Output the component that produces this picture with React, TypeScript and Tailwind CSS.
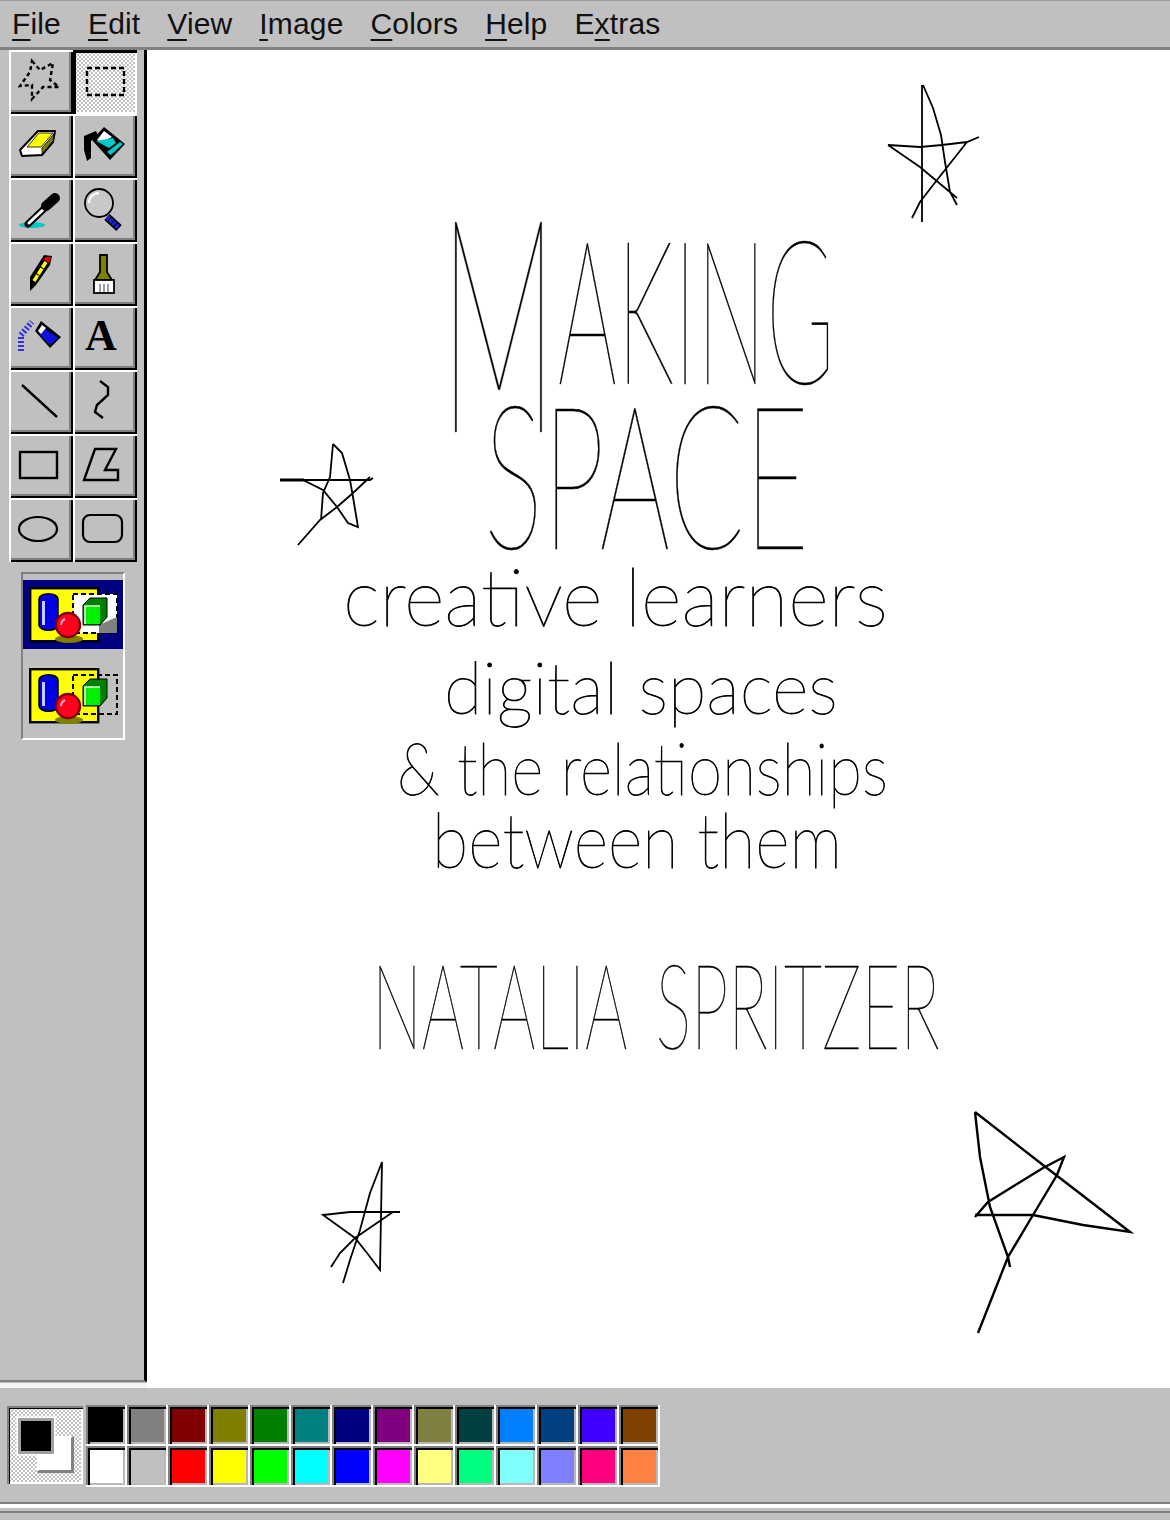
const menus = [
  { before: "", key: "F", after: "ile" },
  { before: "", key: "E", after: "dit" },
  { before: "", key: "V", after: "iew" },
  { before: "", key: "I", after: "mage" },
  { before: "", key: "C", after: "olors" },
  { before: "", key: "H", after: "elp" },
  { before: "E", key: "x", after: "tras" },
];

const topColors = ["bg-[#000000]", "bg-[#808080]", "bg-[#800000]", "bg-[#808000]", "bg-[#008000]", "bg-[#008080]", "bg-[#000080]", "bg-[#800080]", "bg-[#808040]", "bg-[#004040]", "bg-[#0080ff]", "bg-[#004080]", "bg-[#4000ff]", "bg-[#804000]"];
const bottomColors = ["bg-[#ffffff]", "bg-[#c0c0c0]", "bg-[#ff0000]", "bg-[#ffff00]", "bg-[#00ff00]", "bg-[#00ffff]", "bg-[#0000ff]", "bg-[#ff00ff]", "bg-[#ffff80]", "bg-[#00ff80]", "bg-[#80ffff]", "bg-[#8080ff]", "bg-[#ff0080]", "bg-[#ff8040]"];

// every tool is drawn in page coordinates, the viewBox picks out its cell
const tools = [
  <g fill="none" stroke="#000" strokeWidth="2.4" strokeDasharray="4 3">
    <polygon points="32,61 40,70 53,63 50,80 59,87 43,87 32,99 32,85 20,86 30,72" />
  </g>,
  <rect x="87" y="68" width="37" height="27" fill="none" stroke="#000" strokeWidth="2.4" strokeDasharray="5 3" />,
  <g stroke="#000" strokeWidth="2" strokeLinejoin="round">
    <polygon points="20,150 38,131 55,131 53,142 42,155 22,156" fill="#fff" />
    <polygon points="27,147 39,133 53,133 41,147" fill="#ffff00" strokeWidth="0.8" />
    <polygon points="42,148 54,134 53,141 42,154" fill="#808000" strokeWidth="0.8" />
  </g>,
  <g>
    <path d="M84 136 L96 131 L98 135 L91 141 L91 158 L87 161 L84 150 Z" fill="#000" />
    <polygon points="104,127 125,144 110,160 92,140" fill="#000" />
    <polygon points="104,131 112,137 102,142 97,140" fill="#fff" />
    <polygon points="96,141 113,138 116,143 109,148" fill="#00c8c8" />
    <polygon points="111,155 107,152 120,142 123,144" fill="#00c8c8" />
  </g>,
  <g strokeLinecap="round">
    <ellipse cx="32" cy="225" rx="13" ry="3" fill="#00c8c8" />
    <line x1="47" y1="206" x2="28" y2="224" stroke="#000" strokeWidth="7" />
    <line x1="46" y1="207" x2="29" y2="223" stroke="#fff" strokeWidth="3" />
    <line x1="46" y1="206" x2="55" y2="198" stroke="#000" strokeWidth="10" />
  </g>,
  <g>
    <circle cx="99" cy="203" r="14" fill="#c8c8c8" stroke="#000" strokeWidth="1.8" />
    <path d="M89 203 A10 10 0 0 1 99 193" fill="none" stroke="#fff" strokeWidth="2" />
    <line x1="107" y1="217" x2="119" y2="228" stroke="#000" strokeWidth="8" />
    <line x1="107" y1="217" x2="119" y2="228" stroke="#2020e0" strokeWidth="5" strokeDasharray="3 1" />
  </g>,
  <g>
    <polygon points="30,291 30,277 44,255 52,256 50,265 36,285" fill="#000" />
    <line x1="34" y1="281" x2="46" y2="262" stroke="#ffff00" strokeWidth="3.5" strokeDasharray="7 1" />
    <polygon points="45,257 51,257 49,263 44,260" fill="#e00000" />
  </g>,
  <g stroke="#000" strokeWidth="1.8">
    <path d="M100 255 H107 V272 L112 280 H95 L100 272 Z" fill="#808000" />
    <rect x="94" y="280" width="20" height="13" fill="#fff" />
    <path d="M100 284 V292 M104 284 V292 M108 284 V292" stroke="#808080" strokeWidth="1.5" />
  </g>,
  <g>
    <path d="M21 351 V335 L32 322" fill="none" stroke="#3030e0" strokeWidth="6" strokeDasharray="2 2" />
    <polygon points="41,321 61,337 50,348 35,331" fill="#000" />
    <polygon points="45,329 58,338 50,345 40,335" fill="#1010e0" />
    <polygon points="38,331 42,325 46,328 41,334" fill="#fff" />
  </g>,
  <text x="101" y="350" textAnchor="middle" fontFamily="'Liberation Serif', serif" fontWeight="700" fontSize="44" fill="#000">A</text>,
  <line x1="22" y1="385" x2="57" y2="417" stroke="#000" strokeWidth="2.4" />,
  <polyline points="100,381 108,387 108,395 97,405 95,412 103,418" fill="none" stroke="#000" strokeWidth="2.4" />,
  <rect x="20" y="452" width="37" height="26" fill="none" stroke="#000" strokeWidth="2.4" />,
  <polygon points="95,449 116,449 105,470 118,470 118,480 84,480" fill="none" stroke="#000" strokeWidth="2.4" />,
  <ellipse cx="38" cy="529" rx="19" ry="12" fill="none" stroke="#000" strokeWidth="2.2" />,
  <rect x="83" y="515" width="39" height="27" rx="7" fill="none" stroke="#000" strokeWidth="2.2" />,
];

const toolBoxes = [
  "9 50 64 64", "73 50 64 64",
  "9 114 64 64", "73 114 64 64",
  "9 178 64 64", "73 178 64 64",
  "9 242 64 64", "73 242 64 64",
  "9 306 64 64", "73 306 64 64",
  "9 370 64 64", "73 370 64 64",
  "9 434 64 64", "73 434 64 64",
  "9 498 64 64", "73 498 64 64",
];

const OpaqueIcon = ({ opaque }: { opaque: boolean }) => (
  <svg viewBox="0 0 92 60" className="w-[92px] h-[60px] block">
    <rect x="1.2" y="1.2" width="68" height="53" fill="#ffff00" stroke="#000" strokeWidth="2.4" />
    <rect x="44" y="7" width="44" height="39" fill={opaque ? "#fff" : "none"} stroke="#000" strokeWidth="2" strokeDasharray="5 3" />
    {opaque && <polygon points="70,38 88,30 88,46 70,46" fill="#808080" />}
    <ellipse cx="40" cy="52" rx="14" ry="4" fill="#808000" />
    <path d="M10 12 A9 5 0 0 1 29 12 V38 A9 5 0 0 1 10 38 Z" fill="#0000e0" stroke="#000" strokeWidth="1.5" />
    <rect x="13" y="14" width="3" height="24" fill="#c8c8ff" />
    <circle cx="39" cy="38" r="12" fill="#ff0020" stroke="#800000" strokeWidth="2.4" />
    <path d="M32 38 A7 7 0 0 1 36 32" fill="none" stroke="#ffb0c0" strokeWidth="2" />
    <polygon points="54,18 61,11 78,11 78,30 71,38 54,38" fill="#008000" stroke="#000" strokeWidth="1" />
    <rect x="56" y="19" width="15" height="18" fill="#00f000" />
    <path d="M56 37 V19 H71" fill="none" stroke="#e0ffe0" strokeWidth="1.6" />
  </svg>
);

const App = () => {
  return (
    <div className="w-[1170px] h-[1520px] flex flex-col overflow-hidden bg-[#c0c0c0] font-['Liberation_Sans',Arial,sans-serif] text-black">
      {/* menu bar */}
      <div className="h-[50px] flex items-start gap-[27px] pl-3 pt-[5px] border-t border-[#9a9a9a] border-b-[3px] border-b-[#808080] text-[30px] leading-[36px] tracking-[0.15px] text-[#111]">
        {menus.map((m) => (
          <span key={m.key}>
            {m.before}
            <span className="underline decoration-2 underline-offset-[5px]">{m.key}</span>
            {m.after}
          </span>
        ))}
      </div>

      <div className="flex-1 flex min-h-0">
        {/* tool column */}
        <div className="w-[147px] flex flex-col">
          <div className="flex-1 flex border-r-[3px] border-black border-b-2 border-b-[#808080] pl-[9px]">
            <div>
              <div className="grid grid-cols-[64px_64px] grid-rows-[repeat(8,64px)]">
                {tools.map((tool, i) => (
                  <div
                    key={toolBoxes[i]}
                    className={
                      i === 1
                        ? "bg-[repeating-conic-gradient(#ffffff_0_25%,#c0c0c0_0_50%)] bg-size-[4px_4px] shadow-[inset_3px_3px_0_#000,inset_-2px_-2px_0_#fff]"
                        : "bg-[#c0c0c0] shadow-[inset_2px_2px_0_#fff,inset_-2px_-2px_0_#000,inset_-4px_-4px_0_#808080]"
                    }
                  >
                    <svg viewBox={toolBoxes[i]} className="w-16 h-16 block">
                      {tool}
                    </svg>
                  </div>
                ))}
              </div>
              {/* opaque / transparent selection */}
              <div className="mt-[10px] ml-3 w-[104px] h-[168px] border-2 border-[#808080] border-r-white border-b-white pt-[6px] flex flex-col">
                <div className="h-[69px] bg-[#000080] pl-[6px] pt-[7px]">
                  <OpaqueIcon opaque />
                </div>
                <div className="pl-[6px] pt-[19px]">
                  <OpaqueIcon opaque={false} />
                </div>
              </div>
            </div>
          </div>
          <div className="h-[5px] mt-px bg-[#f4f4f4]" />
        </div>

        {/* drawing area */}
        <div className="flex-1 relative bg-white overflow-hidden font-['Lato',sans-serif] font-thin text-black leading-[0.75]">
          <svg viewBox="147 50 1023 1338" className="absolute inset-0 w-full h-full" fill="none" stroke="#000" strokeWidth="1.8">
            <path d="M923 85 L933 108 L941 135 L945 162 L950 192 L957 205 M922 85 V222 M888 145 L920 147 L942 145 L967 142 L979 137 M888 145 L920 167 L957 198 M967 142 L937 180 L920 202 L912 218" />
            <path d="M333 444 L330 477 L323 493 L321 520 M333 444 L342 453 L350 480 L353 497 L358 527 L348 523 L337 507 L323 490 L303 480 M280 480 L370 480 L373 478 M370 477 L353 493 L337 507 L320 520 L298 545" />
            <path d="M280 480 H304" strokeWidth="3" />
            <path d="M382 1162 L370 1193 L360 1230 L350 1260 L343 1283 M382 1162 L380 1270 L367 1253 L355 1238 L323 1215 L350 1212 L400 1212 M393 1212 L355 1238 L340 1253 L331 1267" />
            <path d="M975 1112 L1043 1165 L1130 1232 L1083 1225 L1033 1215 L975 1215 M975 1112 L980 1157 L990 1207 L1008 1257 L1010 1267 M975 1217 L988 1202 L1043 1168 L1064 1157 L1057 1175 L1033 1215 L1008 1257 L978 1333" strokeWidth="2.4" />
          </svg>

          <div className="absolute left-[293px] top-[106px] text-[200px] whitespace-nowrap origin-top-left scale-x-[0.465] [-webkit-text-stroke:0.5px_#000]">
            <span className="relative top-[48px] inline-block text-[300px] -mr-[14px] origin-left scale-x-[0.94]">M</span>
            AKING
          </div>
          <div className="absolute left-[337px] top-[347px] text-[200px] whitespace-nowrap origin-top-left scale-x-[0.555] [-webkit-text-stroke:0.5px_#000]">
            SPACE
          </div>
          <div className="absolute left-[196px] top-[515px] text-[80px] whitespace-nowrap origin-top-left scale-x-[0.98] [-webkit-text-stroke:0.8px_#000]">
            creative learners
          </div>
          <div className="absolute left-[297px] top-[609px] text-[72px] whitespace-nowrap origin-top-left scale-x-[0.98] [-webkit-text-stroke:0.8px_#000]">
            digital spaces
          </div>
          <div className="absolute left-[250px] top-[690px] text-[72px] whitespace-nowrap origin-top-left scale-x-[0.86] [-webkit-text-stroke:0.8px_#000]">
            &amp; the relationships
          </div>
          <div className="absolute left-[285px] top-[760px] text-[76px] whitespace-nowrap origin-top-left scale-x-[0.875] [-webkit-text-stroke:0.8px_#000]">
            between them
          </div>
          <div className="absolute left-[225px] top-[910px] text-[118px] whitespace-nowrap origin-top-left scale-x-[0.565] [word-spacing:20px] [-webkit-text-stroke:0.6px_#000]">
            NATALIA SPRITZER
          </div>
        </div>
      </div>

      {/* colour box and status lines */}
      <div className="h-[132px] flex flex-col">
        <div className="h-[114px] flex items-start pl-[7px] pt-[17px] gap-[3px]">
          <div className="relative mt-px w-[76px] h-[78px] bg-[repeating-conic-gradient(#ffffff_0_25%,#c0c0c0_0_50%)] bg-size-[4px_4px] shadow-[inset_2px_2px_0_#808080,inset_3px_3px_0_#000,inset_-2px_-2px_0_#fff]">
            <div className="absolute left-[30px] top-[30px] w-9 h-9 bg-white border-2 border-white border-r-[#808080] border-b-[#808080] shadow-[1px_1px_0_#808080]" />
            <div className="absolute left-[11px] top-3 w-9 h-9 bg-black border-[3px] border-[#a0a0a0] shadow-[0_0_0_1.5px_#fff]" />
          </div>
          <div className="w-[574px] grid grid-cols-14 grid-rows-2 bg-white">
            {[...topColors, ...bottomColors].map((color, i) => (
              <div key={i} className="h-[41px] pr-0.5 pb-0.5">
                <div className={`w-full h-full ${color} shadow-[inset_2px_2px_0_#808080,inset_4px_4px_0_#000,inset_-2px_-2px_0_#b8b8b8]`} />
              </div>
            ))}
          </div>
        </div>
        <div className="h-[2px] bg-[#808080]" />
        <div className="h-[4px] bg-white" />
        <div className="h-[3px]" />
        <div className="h-[2px] bg-[#808080]" />
      </div>
    </div>
  );
};

export default App;
